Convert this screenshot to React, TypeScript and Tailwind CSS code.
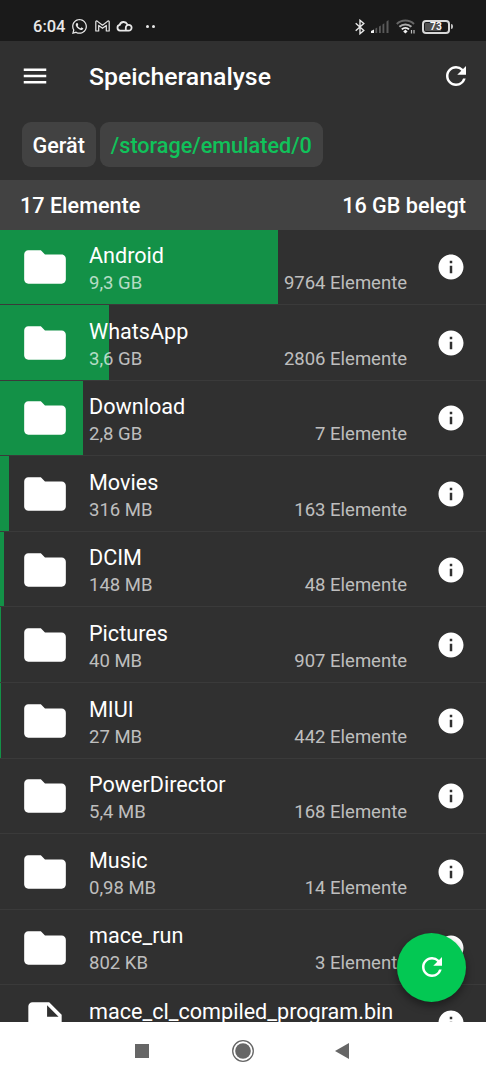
import { MdFolder, MdInfo, MdMenu, MdRefresh } from 'react-icons/md'
import { FaWhatsapp } from 'react-icons/fa'
import clsx from 'clsx'

type Entry = {
  name: string
  size?: string
  count?: string
  // share of the used storage, in percent
  share: number
  file?: boolean
}

const entries: Entry[] = [
  { name: 'Android',       size: '9,3 GB',  count: '9764 Elemente', share: 57.3 },
  { name: 'WhatsApp',      size: '3,6 GB',  count: '2806 Elemente', share: 22.4 },
  { name: 'Download',      size: '2,8 GB',  count: '7 Elemente',    share: 17 },
  { name: 'Movies',        size: '316 MB',  count: '163 Elemente',  share: 1.95 },
  { name: 'DCIM',          size: '148 MB',  count: '48 Elemente',   share: 0.9 },
  { name: 'Pictures',      size: '40 MB',   count: '907 Elemente',  share: 0.27 },
  { name: 'MIUI',          size: '27 MB',   count: '442 Elemente',  share: 0.17 },
  { name: 'PowerDirector', size: '5,4 MB',  count: '168 Elemente',  share: 0 },
  { name: 'Music',         size: '0,98 MB', count: '14 Elemente',   share: 0 },
  { name: 'mace_run',      size: '802 KB',  count: '3 Elemente',    share: 0 },
  { name: 'mace_cl_compiled_program.bin', share: 0, file: true },
]

function StatusBar() {
  return (
    <div className="flex h-[41px] shrink-0 items-center bg-[#1a1a1a] pl-[33px] pr-[33px] pt-3 text-[#e8e8e8]">
      <span className="w-[38px] pt-px text-[16.5px] leading-none font-medium">6:04</span>
      <FaWhatsapp size={17} />
      {/* Gmail */}
      <svg className="mb-px ml-[7px]" width="15" height="12" viewBox="0 0 15 12" fill="none" stroke="currentColor" strokeWidth="1.2" strokeLinejoin="round">
        <path d="M.8 11V1.6Q1.2.6 2.2 1.1L7.5 5.2 12.8 1.1Q13.8.6 14.2 1.6V11H11.3V5.4L7.5 8.3 3.7 5.4V11Z" />
      </svg>
      {/* Cloud */}
      <svg className="mb-px ml-[6px]" width="17" height="12" viewBox="0 0 17 12" fill="none" stroke="currentColor" strokeWidth="1.8">
        <path d="M12.6 10.6H4A2.9 2.9 0 0 1 3.7 4.9 4.1 4.1 0 0 1 11.3 4.3M12.6 10.6A2.9 2.9 0 1 0 9.8 7.7V10.6" />
      </svg>
      <span className="ml-[13px] size-[3px] rounded-full bg-current" />
      <span className="ml-[3px] size-[3px] rounded-full bg-current" />

      <div className="ml-auto flex items-center">
        {/* Bluetooth */}
        <svg width="10" height="16" viewBox="0 0 10 16" fill="none" stroke="currentColor" strokeWidth="1.4">
          <path d="M.7 4.2 8.8 11.5 5 14.7V1.3L8.8 4.5.7 11.8" />
        </svg>
        <svg className="ml-[6px]" width="18" height="13" viewBox="0 0 18 13" fill="#5a5a5a">
          <path d="M0 13V11L3 9.5V13Z" fill="#f0f0f0" />
          <path d="M4.4 8.4 6.2 7.5V13H4.4ZM8 6.5 9.8 5.5V13H8ZM11.5 4.5 13.3 3.3V13H11.5ZM15.5 1.5 17.5 0V13H15.5Z" />
        </svg>
        <svg className="ml-[7px]" width="20" height="15" viewBox="0 0 20 15" fill="none">
          <path d="M.8 5A12.5 12.5 0 0 1 18 5" stroke="#666" strokeWidth="2" />
          <path d="M3.4 7.8A8.7 8.7 0 0 1 15.4 7.8" stroke="#aaa" strokeWidth="2" />
          <path d="M5.8 10.4A5.2 5.2 0 0 1 13 10.4" stroke="#f0f0f0" strokeWidth="2" />
          <path d="M9.4 10.5 11.6 12.4 9.4 14.4 7.2 12.4Z" fill="#f0f0f0" />
          <path d="M15.5 11V14.5M18 11V14.5" stroke="#bbb" strokeWidth="1.2" />
        </svg>
        <div className="ml-[6px] flex h-[14px] w-[28px] rounded-[4px] border-2 border-[#d8d8d8] p-px">
          <div className="flex h-full w-full items-center justify-center rounded-[1px] bg-linear-to-r from-[#505050] from-73% to-transparent to-73% pt-px text-[10.5px] leading-none font-medium text-white">
            73
          </div>
        </div>
        <div className="ml-px h-[5px] w-[2px] rounded-r-sm bg-[#c0c0c0]" />
      </div>
    </div>
  )
}

function Row({ entry }: { entry: Entry }) {
  return (
    <div className="relative flex h-[75.6px] shrink-0 border-b border-[#3a3a3a]">
      {entry.share > 0 && (
        <div className="absolute inset-y-0 left-0 bg-[#139147]" style={{ width: `${entry.share}%` }} />
      )}
      <div className="relative flex w-[89px] shrink-0 justify-start pl-[19.6px] pt-[12.7px]">
        {entry.file ? (
          <svg width="50" height="50" viewBox="0 0 24 24" fill="currentColor">
            <path d="M6 2c-1.1 0-2 .9-2 2v16c0 1.1.9 2 2 2h12c1.1 0 2-.9 2-2V8l-6-6H6zm7 7V3.5L18.5 9H13z" />
          </svg>
        ) : (
          <MdFolder size={50} />
        )}
      </div>
      <div className="relative flex-1 pt-[12.5px]">
        <div className="text-[21.6px] leading-[27px] whitespace-nowrap">{entry.name}</div>
        <div className="flex justify-between pt-px text-[18.5px] leading-[27px] text-white/70">
          <span>{entry.size}</span>
          <span>{entry.count}</span>
        </div>
      </div>
      <div className="flex w-[79px] shrink-0 pl-[29.4px] pt-[22.7px]">
        <MdInfo size={30} />
      </div>
    </div>
  )
}

function NavigationBar() {
  return (
    <div className="flex h-[58.5px] shrink-0 items-center bg-white pl-[135px] text-[#666]">
      <div className="size-[14px] bg-current" />
      <svg className="ml-[82px] mr-[80px]" width="24" height="24" viewBox="0 0 24 24">
        <circle cx="12" cy="12" r="10.3" fill="none" stroke="currentColor" strokeWidth="1.3" />
        <circle cx="12" cy="12" r="7.8" fill="currentColor" />
      </svg>
      <svg width="14" height="16" viewBox="0 0 14 16" fill="currentColor">
        <path d="M0 8 14 0V16Z" />
      </svg>
    </div>
  )
}

export default function App() {
  return (
    <div className="flex h-[1080px] w-[486px] flex-col overflow-hidden bg-[#303030] font-['Roboto',sans-serif] text-white">
      <StatusBar />

      <header className="flex h-[70px] shrink-0 items-center pl-[19.6px] pr-[15px]">
        <MdMenu size={30} />
        <h1 className="ml-[39.4px] pt-[3px] text-[24.8px] leading-none font-medium">Speicheranalyse</h1>
        <MdRefresh className="ml-auto" size={30} />
      </header>

      {/* Path */}
      <div className="flex h-[69px] shrink-0 gap-[4px] pl-[21.5px] pt-[11px] text-[21.6px] font-medium">
        <div className="flex h-[45px] items-center rounded-[9px] bg-[#424242] px-[11px] pt-[3px]">Gerät</div>
        <div className="flex h-[45px] items-center rounded-[9px] bg-[#424242] px-[11px] pt-[3px] text-[#10c25a]">
          /storage/emulated/0
        </div>
      </div>

      <div className="flex h-[49.5px] shrink-0 items-center justify-between bg-[#424242] px-[20px] pt-[2px] text-[21.6px] font-medium">
        <span>17 Elemente</span>
        <span>16 GB belegt</span>
      </div>

      <main className="relative min-h-0 flex-1">
        <div className="flex h-full flex-col overflow-hidden">
          {entries.map((entry) => (
            <Row key={entry.name} entry={entry} />
          ))}
        </div>
        <button
          className={clsx(
            'absolute right-[20px] bottom-[20px] flex size-[69px] items-center justify-center',
            'rounded-full bg-[#03c853] shadow-[0_4px_9px_rgba(0,0,0,0.4)]',
          )}
        >
          <MdRefresh size={30} />
        </button>
      </main>

      <NavigationBar />
    </div>
  )
}
